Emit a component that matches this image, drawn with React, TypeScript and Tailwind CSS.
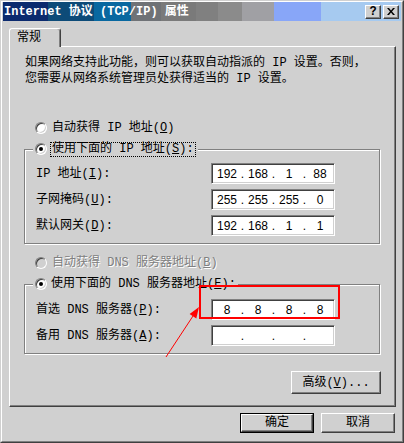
import React from "react";

const Acc = ({ k }: { k: string }) => (
  <>
    (<span className="underline">{k}</span>)
  </>
);

const Radio = ({ checked, disabled }: { checked?: boolean; disabled?: boolean }) => (
  <span
    className={
      "flex h-[12px] w-[12px] shrink-0 items-center justify-center rounded-full border border-t-[#808080] border-l-[#808080] border-r-white border-b-white shadow-[inset_1px_1px_0_#404040,inset_-1px_-1px_0_#d0d0d0] " +
      (disabled ? "bg-[#d0d0d0]" : "bg-white")
    }
  >
    {checked && <span className="h-[4px] w-[4px] rounded-full bg-black"></span>}
  </span>
);

const IpBox = ({ parts }: { parts: string[] }) => (
  <div className="flex h-[21px] w-[124px] shrink-0 items-center border border-t-[#808080] border-l-[#808080] border-r-white border-b-white bg-white pl-[3px] font-['Liberation_Sans',sans-serif] text-[12px] shadow-[inset_1px_1px_0_#404040,inset_-1px_-1px_0_#d0d0d0]">
    {parts.map((p, i) => (
      <React.Fragment key={i}>
        <span className="w-[24px] text-center">{p}</span>
        {i < 3 && <span className="w-[7px] text-center">.</span>}
      </React.Fragment>
    ))}
  </div>
);

const Field = ({ label, parts }: { label: React.ReactNode; parts: string[] }) => (
  <div className="flex items-center pl-[11px]">
    <div className="w-[175px] whitespace-nowrap">{label}</div>
    <IpBox parts={parts} />
  </div>
);

const Button = ({ children, className = "" }: { children: React.ReactNode; className?: string }) => (
  <button
    className={
      "flex items-center justify-center border border-t-white border-l-white border-r-[#404040] border-b-[#404040] bg-[#d0d0d0] shadow-[inset_-1px_-1px_0_#808080] " +
      className
    }
  >
    {children}
  </button>
);

const App = () => {
  return (
    <div className="relative h-[443px] w-[404px] overflow-hidden bg-[#d0d0d0] font-['Liberation_Mono','Noto_Sans_CJK_SC',monospace] text-[12px] leading-[16px] text-black">
      <div className="flex h-full flex-col border border-t-[#d0d0d0] border-l-[#d0d0d0] border-r-[#404040] border-b-[#404040]">
        <div className="flex h-full flex-col border border-t-white border-l-white border-r-[#808080] border-b-[#808080] px-px">
          {/* title bar */}
          <div className="flex h-[19px] shrink-0 items-center justify-between bg-[linear-gradient(90deg,#0b2a6e_0_45px,#0d4b78_45px_91px,#0868a0_91px_128px,#6f7276_128px_158px,#7a7a7a_158px_193px,#808080_193px_215px,#8b8b8b_215px_239px,#a0a0a4_239px_271px,#88a6f8_271px_318px,#a6caf0_318px)] pl-px pr-[2px]">
            <span className="whitespace-pre font-bold text-white">Internet 协议 (TCP/IP) 属性</span>
            <div className="flex gap-[2px]">
              <Button className="h-[14px] w-[16px] text-[12px] font-bold leading-none">?</Button>
              <Button className="h-[14px] w-[16px]">
                <svg width="8" height="7" viewBox="0 0 8 7">
                  <path d="M0 0h2l2 2.5L6 0h2L5 3.5 8 7H6L4 4.5 2 7H0l3-3.5z" fill="#000" />
                </svg>
              </Button>
            </div>
          </div>

          {/* body */}
          <div className="flex flex-col pl-[6px] pr-[5px] pt-[7px]">
            <div className="h-[18px]">
              <div className="relative z-10 flex h-[19px] w-[52px] items-center rounded-t-[3px] border-l border-t border-r border-l-white border-t-white border-r-[#404040] bg-[#d0d0d0] pl-[7px] shadow-[inset_-1px_0_0_#808080]">
                常规
              </div>
            </div>

            <div className="flex h-[361px] flex-col border border-t-white border-l-white border-r-[#404040] border-b-[#404040] pl-[14px] pt-[8px] shadow-[inset_-1px_-1px_0_#808080]">
              <p className="whitespace-pre pl-px">
                如果网络支持此功能，则可以获取自动指派的 IP 设置。否则，
                <br />
                您需要从网络系统管理员处获得适当的 IP 设置。
              </p>

              <div className="mt-[33px] flex h-[16px] items-center gap-[5px] pl-[11px]">
                <Radio />
                <span className="whitespace-pre">
                  自动获得 IP 地址<Acc k="O" />
                </span>
              </div>

              <div className="mt-[13px] flex w-[356px] flex-col gap-[5px] border border-[#808080] pb-[7px] shadow-[inset_1px_1px_0_#fff,1px_1px_0_#fff]">
                <div className="-mt-[9px] mb-[1px] ml-[8px] flex h-[16px] w-fit items-center gap-[3px] bg-[#d0d0d0] px-[2px]">
                  <Radio checked />
                  <span className="whitespace-pre border border-dotted border-black pl-px pr-px leading-[13px]">
                    使用下面的 IP 地址<Acc k="S" />:
                  </span>
                </div>
                <Field label={<>IP 地址<Acc k="I" />:</>} parts={["192", "168", "1", "88"]} />
                <Field label={<>子网掩码<Acc k="U" />:</>} parts={["255", "255", "255", "0"]} />
                <Field label={<>默认网关<Acc k="D" />:</>} parts={["192", "168", "1", "1"]} />
              </div>

              <div className="mt-[11px] flex h-[16px] items-center gap-[5px] pl-[11px]">
                <Radio disabled />
                <span className="whitespace-pre text-[#808080] [text-shadow:1px_1px_0_#fff]">
                  自动获得 DNS 服务器地址<Acc k="B" />
                </span>
              </div>

              <div className="mt-[13px] flex w-[356px] flex-col gap-[5px] border border-[#808080] pb-[7px] shadow-[inset_1px_1px_0_#fff,1px_1px_0_#fff]">
                <div className="-mt-[9px] mb-[2px] ml-[8px] flex h-[16px] w-fit items-center gap-[4px] bg-[#d0d0d0] px-[2px]">
                  <Radio checked />
                  <span className="whitespace-pre">
                    使用下面的 DNS 服务器地址<Acc k="E" />:
                  </span>
                </div>
                <Field label={<>首选 DNS 服务器<Acc k="P" />:</>} parts={["8", "8", "8", "8"]} />
                <Field label={<>备用 DNS 服务器<Acc k="A" />:</>} parts={["", "", "", ""]} />
              </div>

              <div className="mt-[17px] flex w-[357px] justify-end">
                <Button className="h-[23px] w-[90px]">
                  高级<Acc k="V" />...
                </Button>
              </div>
            </div>

            <div className="mt-[6px] flex justify-end gap-[7px] pr-px">
              <div className="border border-black">
                <Button className="h-[18px] w-[72px]">确定</Button>
              </div>
              <Button className="h-[20px] w-[74px]">取消</Button>
            </div>
          </div>
        </div>
      </div>

      {/* annotation */}
      <div className="pointer-events-none absolute left-[199px] top-[285px] h-[34px] w-[141px] border-2 border-[#ff0000]"></div>
      <svg className="pointer-events-none absolute left-0 top-0" width="404" height="443">
        <line x1="166" y1="357" x2="193" y2="316" stroke="#ff0000" strokeWidth="1" />
        <polygon points="199,307 196.3,318.4 189.6,314" fill="#ff0000" />
      </svg>
    </div>
  );
};

export default App;
